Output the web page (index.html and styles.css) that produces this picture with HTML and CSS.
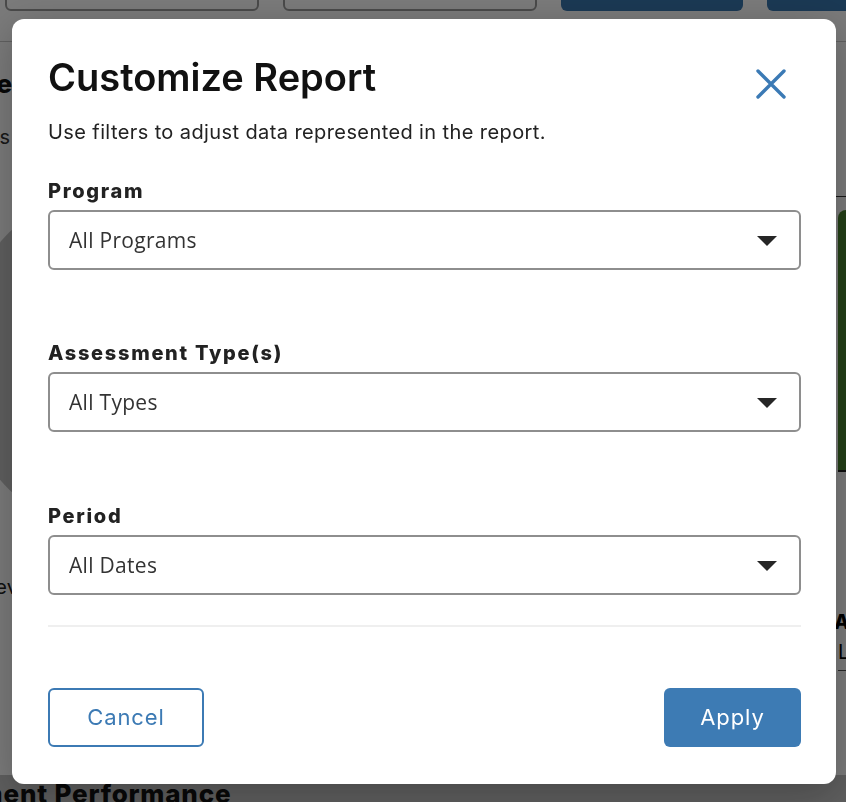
FILE: index.html
```html
<!DOCTYPE html>
<html lang="en">

<head>
    <meta charset="UTF-8">
    <title>Customize Report</title>
    <link rel="stylesheet" href="styles.css">
</head>

<body>

    <div class="page">

        <div class="toolbar">
            <button class="tool tool-outline">Export</button>
            <button class="tool tool-outline">Share</button>
            <button class="tool tool-solid">Customize</button>
            <button class="tool tool-solid">Print</button>
        </div>

        <section class="dash">
            <aside class="left">
                <h2 class="left-title">Score</h2>
                <p class="left-sub">Results</p>
                <div class="donut"></div>
                <p class="left-legend">Level</p>
            </aside>

            <div class="middle"></div>

            <aside class="right">
                <div class="chart-top"></div>
                <div class="bar"></div>
                <div class="axis">
                    <span>Activity</span>
                    <span>Applied</span>
                </div>
                <p class="right-head">AS</p>
                <p class="right-row">L</p>
            </aside>
        </section>

        <h2 class="section-title">Assessment Performance</h2>

    </div>

    <div class="overlay">

        <div class="modal">

            <header class="modal-head">
                <h1>Customize Report</h1>
                <button class="close" aria-label="Close">
                    <svg width="30" height="30" viewBox="0 0 30 30">
                        <path d="M2 2 L28 28 M28 2 L2 28" stroke="#3b7ab5" stroke-width="3.4" stroke-linecap="round" fill="none" />
                    </svg>
                </button>
            </header>

            <p class="intro">Use filters to adjust data represented in the report.</p>

            <div class="field">
                <label>Program</label>
                <div class="select">
                    <span>All Programs</span>
                    <svg width="20" height="10" viewBox="0 0 20 10">
                        <path d="M0 0 H20 L10 10 Z" fill="#262626" />
                    </svg>
                </div>
            </div>

            <div class="field">
                <label>Assessment Type(s)</label>
                <div class="select">
                    <span>All Types</span>
                    <svg width="20" height="10" viewBox="0 0 20 10">
                        <path d="M0 0 H20 L10 10 Z" fill="#262626" />
                    </svg>
                </div>
            </div>

            <div class="field">
                <label>Period</label>
                <div class="select">
                    <span>All Dates</span>
                    <svg width="20" height="10" viewBox="0 0 20 10">
                        <path d="M0 0 H20 L10 10 Z" fill="#262626" />
                    </svg>
                </div>
            </div>

            <hr class="divider">

            <footer class="actions">
                <button class="btn btn-cancel">Cancel</button>
                <button class="btn btn-apply">Apply</button>
            </footer>

        </div>

    </div>

</body>

</html>
```

FILE: styles.css
```css
body {
    margin: 0;
    background-color: white;
    font-family: 'Inter', sans-serif;
    overflow: hidden;
}

/* page behind the dialog */

.page {
    width: 846px;
    height: 802px;
    overflow: hidden;
}

.toolbar {
    display: flex;
    margin-top: -30px;
    padding-left: 5px;
    height: 41px;
}

.tool {
    flex-shrink: 0;
    height: 41px;
    border-radius: 6px;
    font-size: 16px;
    margin-right: 24px;
}

.tool-outline {
    width: 254px;
    background-color: white;
    border: 2px solid #9a9a9a;
}

.tool-solid {
    width: 182px;
    background-color: #3877af;
    border: none;
}

.dash {
    display: grid;
    grid-template-columns: 12px 1fr 10px;
    height: 734px;
    margin-top: 30px;
    border-top: 1px solid #c8c8c8;
    box-sizing: border-box;
}

.left {
    display: flex;
    flex-direction: column;
    align-items: flex-end;
    white-space: nowrap;
}

.left-title {
    margin: 26px 0 0;
    font-size: 26px;
    line-height: 32px;
    font-weight: 800;
    color: #111;
}

.left-sub {
    margin: 25px 2px 0 0;
    font-size: 20px;
    line-height: 24px;
    color: #333;
}

.donut {
    flex-shrink: 0;
    width: 364px;
    height: 364px;
    border-radius: 50%;
    background-color: #c6c6c6;
    margin: 30px -308px 0 0;
}

.left-legend {
    margin: 32px -22px 0 0;
    font-size: 20px;
    line-height: 24px;
    color: #222;
}

.right {
    white-space: nowrap;
}

.chart-top {
    height: 154px;
    border-bottom: 1px solid #333;
}

.bar {
    height: 260px;
    margin: 13px 0 0 2px;
    background-color: #4a8430;
    border-radius: 8px 0 0 0;
    border-bottom: 2px solid #222;
}

.axis {
    height: 110px;
    display: flex;
    gap: 14px;
    padding-left: 4px;
}

.axis span {
    display: block;
    transform: rotate(-60deg);
    transform-origin: left bottom;
    font-size: 14px;
    color: #333;
    margin-top: 40px;
}

.right-head {
    margin: 28px 0 0 -2px;
    font-weight: 800;
    font-size: 20px;
}

.right-row {
    margin: 6px 0 0 2px;
    font-size: 20px;
    border-bottom: 1px solid #555;
    padding-bottom: 6px;
}

.section-title {
    margin: 0 0 0 -121px;
    padding-top: 3px;
    font-size: 26px;
    line-height: 32px;
    font-weight: 800;
    letter-spacing: 0.8px;
    color: #111;
    background-color: #c4c4c4;
}

/* dialog */

.overlay {
    position: fixed;
    left: 0;
    top: 0;
    width: 100vw;
    height: 100vh;
    background-color: rgba(0, 0, 0, .52);
    padding: 19px 0 0 12px;
    box-sizing: border-box;
}

.modal {
    width: 824px;
    box-sizing: border-box;
    padding: 36px 35px 37px 36px;
    background-color: white;
    border-radius: 12px;
    box-shadow: 0 10px 40px rgba(0, 0, 0, .25);
}

.modal-head {
    display: flex;
    justify-content: space-between;
    align-items: center;
}

.modal-head h1 {
    margin: 0;
    font-size: 38px;
    line-height: 1.2;
    font-weight: 600;
    color: #111;
}

.close {
    border: none;
    background: none;
    padding: 0;
    margin: 12px 15px 0 0;
    width: 30px;
    height: 30px;
    cursor: pointer;
}

.close svg {
    display: block;
}

.intro {
    margin: 19px 0 0;
    font-size: 20px;
    line-height: 1.2;
    letter-spacing: 0.4px;
    color: #222;
}

.field {
    margin-top: 35px;
}

.field + .field {
    margin-top: 71.5px;
}

.field label {
    display: block;
    margin-bottom: 7px;
    font-size: 20px;
    line-height: 1.2;
    font-weight: 800;
    letter-spacing: 1.7px;
    color: #222;
}

.select {
    height: 60px;
    box-sizing: border-box;
    border: 2px solid #8e8e8e;
    border-radius: 6px;
    display: flex;
    justify-content: space-between;
    align-items: center;
    padding: 0 22px 0 19px;
    font-family: 'Open Sans', sans-serif;
    font-size: 21px;
    letter-spacing: 0.3px;
    color: #333;
}

.select svg {
    display: block;
    margin-top: 2px;
}

.divider {
    margin: 30px 0 0;
    border: none;
    height: 2px;
    background-color: #efefef;
}

.actions {
    display: flex;
    justify-content: space-between;
    margin-top: 61px;
}

.btn {
    height: 59px;
    border-radius: 6px;
    font-family: 'Inter', sans-serif;
    font-size: 22px;
    letter-spacing: 0.9px;
    cursor: pointer;
}

.btn-cancel {
    width: 156px;
    background-color: white;
    border: 2px solid #3c7ab4;
    color: #3c7ab4;
}

.btn-apply {
    width: 137px;
    background-color: #3d7bb4;
    border: none;
    color: white;
}
```
